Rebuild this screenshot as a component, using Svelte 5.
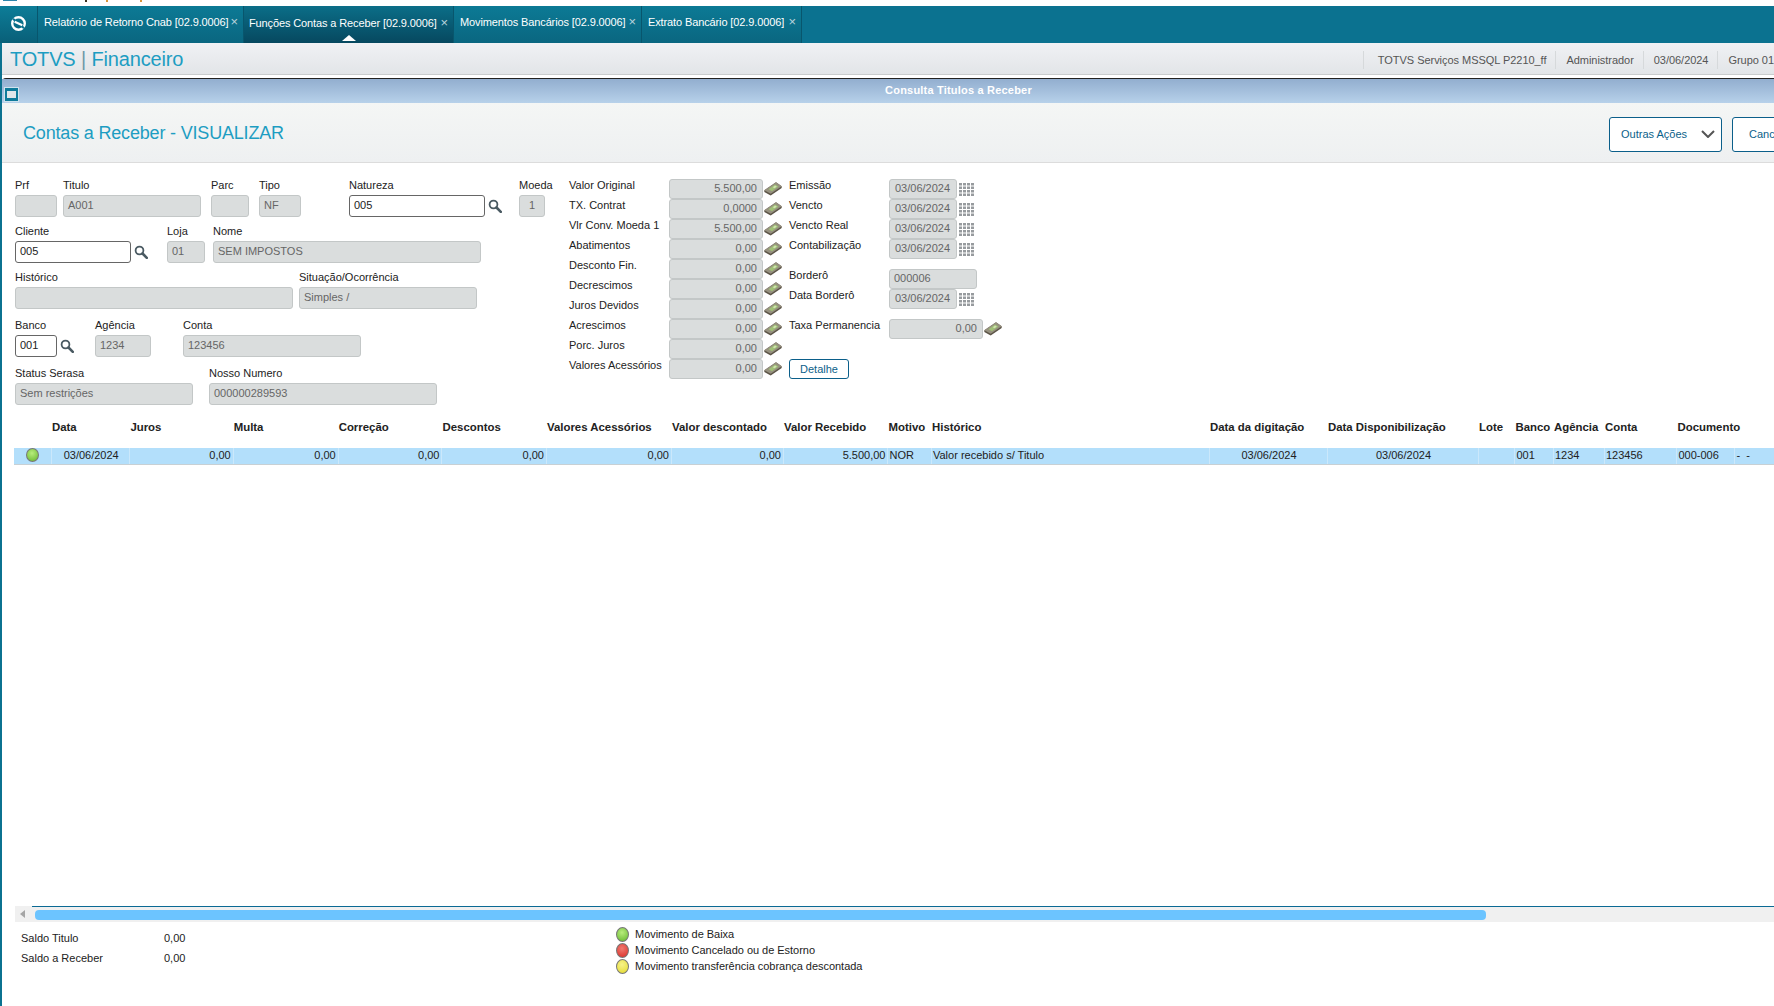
<script lang="ts">
	const tabs = [
		{ title: 'Relatório de Retorno Cnab [02.9.0006]', width: 206 },
		{ title: 'Funções Contas a Receber [02.9.0006]', width: 210, active: true },
		{ title: 'Movimentos Bancários [02.9.0006]', width: 188 },
		{ title: 'Extrato Bancário [02.9.0006]', width: 160 }
	];

	const headerInfo = ['TOTVS Serviços MSSQL P2210_ff', 'Administrador', '03/06/2024', 'Grupo 01'];

	// x = left edge relative to the form column, w = input width
	const formRows = [
		{
			top: 0,
			fields: [
				{ label: 'Prf', value: '', x: 0, w: 42 },
				{ label: 'Titulo', value: 'A001', x: 48, w: 138 },
				{ label: 'Parc', value: '', x: 196, w: 38 },
				{ label: 'Tipo', value: 'NF', x: 244, w: 42 },
				{ label: 'Natureza', value: '005', x: 334, w: 136, edit: true, lookup: true },
				{ label: 'Moeda', value: '1', x: 504, w: 26, center: true }
			]
		},
		{
			top: 7,
			fields: [
				{ label: 'Cliente', value: '005', x: 0, w: 116, edit: true, lookup: true },
				{ label: 'Loja', value: '01', x: 152, w: 38 },
				{ label: 'Nome', value: 'SEM IMPOSTOS', x: 198, w: 268 }
			]
		},
		{
			top: 7,
			fields: [
				{ label: 'Histórico', value: '', x: 0, w: 278 },
				{ label: 'Situação/Ocorrência', value: 'Simples /', x: 284, w: 178 }
			]
		},
		{
			top: 9,
			fields: [
				{ label: 'Banco', value: '001', x: 0, w: 42, edit: true, lookup: true },
				{ label: 'Agência', value: '1234', x: 80, w: 56 },
				{ label: 'Conta', value: '123456', x: 168, w: 178 }
			]
		},
		{
			top: 9,
			fields: [
				{ label: 'Status Serasa', value: 'Sem restrições', x: 0, w: 178 },
				{ label: 'Nosso Numero', value: '000000289593', x: 194, w: 228 }
			]
		}
	];

	const values = [
		['Valor Original', '5.500,00'],
		['TX. Contrat', '0,0000'],
		['Vlr Conv. Moeda 1', '5.500,00'],
		['Abatimentos', '0,00'],
		['Desconto Fin.', '0,00'],
		['Decrescimos', '0,00'],
		['Juros Devidos', '0,00'],
		['Acrescimos', '0,00'],
		['Porc. Juros', '0,00'],
		['Valores Acessórios', '0,00']
	];

	const dates = ['Emissão', 'Vencto', 'Vencto Real', 'Contabilização'];

	const columns = [
		{ name: '', w: 38 },
		{ name: 'Data', value: '03/06/2024', w: 78.4, center: true },
		{ name: 'Juros', value: '0,00', w: 103.3, right: true },
		{ name: 'Multa', value: '0,00', w: 105, right: true },
		{ name: 'Correção', value: '0,00', w: 103.8, right: true },
		{ name: 'Descontos', value: '0,00', w: 104.5, right: true },
		{ name: 'Valores Acessórios', value: '0,00', w: 125, right: true },
		{ name: 'Valor descontado', value: '0,00', w: 112, right: true },
		{ name: 'Valor Recebido', value: '5.500,00', w: 104.5, right: true },
		{ name: 'Motivo', value: 'NOR', w: 43.5 },
		{ name: 'Histórico', value: 'Valor recebido s/ Titulo', w: 278 },
		{ name: 'Data da digitação', value: '03/06/2024', w: 118, center: true },
		{ name: 'Data Disponibilização', value: '03/06/2024', w: 151, center: true },
		{ name: 'Lote', value: '', w: 36.5 },
		{ name: 'Banco', value: '001', w: 38.5 },
		{ name: 'Agência', value: '1234', w: 51 },
		{ name: 'Conta', value: '123456', w: 72.5 },
		{ name: 'Documento', value: '000-006', w: 58 },
		{ name: '', value: '-\u00a0\u00a0-', w: 40 }
	];

	const legend = [
		{ text: 'Movimento de Baixa', color: 'green' },
		{ text: 'Movimento Cancelado ou de Estorno', color: 'red' },
		{ text: 'Movimento transferência cobrança descontada', color: 'yellow' }
	];
</script>

{#snippet lookupIcon()}
	<svg class="lookup" viewBox="0 0 14 14" width="14" height="14">
		<circle cx="5.5" cy="5.5" r="3.9" fill="none" stroke="#4a5a62" stroke-width="1.8" />
		<path d="M8.5 8.5 L12.8 12.8" stroke="#4a5a62" stroke-width="2.6" stroke-linecap="round" />
	</svg>
{/snippet}

{#snippet moneyIcon()}
	<svg class="money" viewBox="0 0 18 14" width="18" height="14">
		<path d="M0.3 8.3 L12 0.3 L17.7 4.3 L17.7 6 L6.7 13.6 L0.3 10 Z" fill="#5d5548" />
		<path d="M0.3 8.3 L12 0.3 L17.7 4.3 L6.7 11.7 Z" fill="#96917f" />
		<path d="M4.5 7.2 L11 2.6 L14.5 4.6 L8 9.2 Z" fill="#9fbf76" />
		<path d="M8.8 5.2 L11 3.6 L12.8 4.6 L10.6 6.2 Z" fill="#d0e2b0" />
	</svg>
{/snippet}

{#snippet calendarIcon()}
	<svg class="calendar" viewBox="0 0 15 13" width="15" height="13">
		<rect x="0" y="0" width="15" height="13" fill="#979b9e" />
		<path
			d="M3.5 0 V13 M7.5 0 V13 M11.5 0 V13 M0 3 H15 M0 6.5 H15 M0 10 H15"
			stroke="#fff"
			stroke-width="1"
		/>
	</svg>
{/snippet}

<div class="page">
	<div class="window-strip">
		<span class="window-icon"></span>
		<span class="speck dark"></span>
		<span class="speck orange-a"></span>
		<span class="speck orange-b"></span>
	</div>

	<nav class="tabs">
		<div class="home">
			<svg viewBox="0 0 20 20" width="17" height="17">
				<circle cx="10" cy="10" r="7.4" fill="none" stroke="#fff" stroke-width="2.8" />
				<path d="M3.5 4.5 L7 7.5 M16.5 15.5 L13 12.5" stroke="#0b7290" stroke-width="2.4" />
				<path d="M5.5 8 L14.5 12" stroke="#fff" stroke-width="2.6" />
			</svg>
		</div>
		{#each tabs as tab}
			<div class="tab" class:active={tab.active} style:width="{tab.width}px">
				<span class="tab-title">{tab.title}</span>
				<span class="close">×</span>
			</div>
		{/each}
	</nav>

	<div class="body">
		<header class="app-header">
			<div class="brand">TOTVS <i>|</i> Financeiro</div>
			<ul class="info">
				{#each headerInfo as item}
					<li>{item}</li>
				{/each}
			</ul>
		</header>

		<div class="dialog">
			<div class="dialog-bar">
				<span class="dialog-icon"><b></b></span>
				<span>Consulta Titulos a Receber</span>
			</div>

			<div class="title-row">
				<h1>Contas a Receber - VISUALIZAR</h1>
				<div class="actions">
					<button class="btn more">
						Outras Ações
						<svg viewBox="0 0 14 8" width="14" height="8">
							<path d="M1 1 L7 7 L13 1" fill="none" stroke="#555" stroke-width="2" />
						</svg>
					</button>
					<button class="btn cancel">Cancelar</button>
				</div>
			</div>

			<section class="form">
				<div class="form-left">
					{#each formRows as row}
						<div class="form-row" style:margin-top="{row.top}px">
							{#each row.fields as f}
								<div class="field" style:left="{f.x}px">
									<span class="label">{f.label}</span>
									<div class="input-line">
										<span
											class="input"
											class:edit={f.edit}
											class:center={f.center}
											style:width="{f.w}px">{f.value}</span
										>
										{#if f.lookup}
											{@render lookupIcon()}
										{/if}
									</div>
								</div>
							{/each}
						</div>
					{/each}
				</div>

				<div class="form-values">
					{#each values as [label, value]}
						<div class="value-row">
							<span class="label">{label}</span>
							<span class="input num">{value}</span>
							{@render moneyIcon()}
						</div>
					{/each}
				</div>

				<div class="form-dates">
					{#each dates as label}
						<div class="value-row">
							<span class="label">{label}</span>
							<span class="input date">03/06/2024</span>
							{@render calendarIcon()}
						</div>
					{/each}
					<div class="value-row spaced">
						<span class="label">Borderô</span>
						<span class="input bordero">000006</span>
					</div>
					<div class="value-row">
						<span class="label">Data Borderô</span>
						<span class="input date">03/06/2024</span>
						{@render calendarIcon()}
					</div>
					<div class="value-row spaced">
						<span class="label">Taxa Permanencia</span>
						<span class="input num">0,00</span>
						{@render moneyIcon()}
					</div>
					<button class="btn detail">Detalhe</button>
				</div>
			</section>

			<section class="grid-wrap">
				<div class="grid-head">
					{#each columns as c}
						<span style:width="{c.w}px">{c.name}</span>
					{/each}
				</div>
				<div class="grid-row">
					{#each columns as c, i}
						<span class="cell" class:right={c.right} class:center={c.center} style:width="{c.w}px">
							{#if i === 0}
								<i class="led green"></i>
							{:else}
								{c.value}
							{/if}
						</span>
					{/each}
				</div>
			</section>

			<div class="scrollbar">
				<span class="arrow"></span>
				<span class="thumb"></span>
			</div>

			<footer class="totals">
				<dl>
					<div><dt>Saldo Titulo</dt><dd>0,00</dd></div>
					<div><dt>Saldo a Receber</dt><dd>0,00</dd></div>
				</dl>
				<ul class="legend">
					{#each legend as item}
						<li><i class="led {item.color}"></i>{item.text}</li>
					{/each}
				</ul>
			</footer>
		</div>
	</div>
</div>

<style>
	:global(body) {
		margin: 0;
		background: #fff;
	}

	.page {
		width: 1774px;
		height: 1006px;
		overflow: hidden;
		display: flex;
		flex-direction: column;
		font-family: 'Liberation Sans', Arial, sans-serif;
		font-size: 11px;
		color: #222;
		background: #fff;
	}

	.window-strip {
		height: 6px;
		flex: none;
		display: flex;
		align-items: flex-start;
	}

	.window-icon {
		width: 14px;
		height: 1px;
		margin-left: 3px;
		background: #2e86ab;
	}

	.speck {
		width: 2px;
		height: 2px;
	}

	.speck.dark {
		margin-left: 68px;
		background: #3a3320;
	}

	.speck.orange-a {
		margin-left: 19px;
		background: #d9963a;
	}

	.speck.orange-b {
		margin-left: 32px;
		background: #d9963a;
	}

	.tabs {
		height: 37px;
		flex: none;
		display: flex;
		background: #0b7290;
		color: #fff;
	}

	.home {
		width: 38px;
		display: flex;
		align-items: center;
		justify-content: center;
		padding-bottom: 2px;
		background: linear-gradient(#0d7d98, #095f78);
		border-right: 1px solid #08566d;
		box-sizing: border-box;
	}

	.tab {
		box-sizing: border-box;
		display: flex;
		align-items: center;
		justify-content: space-between;
		padding: 0 5px 6px 6px;
		white-space: nowrap;
		background: linear-gradient(#0c7a95, #0a6680);
		border-right: 1px solid #08566d;
		position: relative;
		font-size: 11px;
	}

	.tab-title {
		letter-spacing: -0.12px;
	}

	.tab.active {
		background: linear-gradient(#0b6e88, #06485f);
		padding-bottom: 4px;
		padding-left: 5px;
	}

	.tab.active::after {
		content: '';
		position: absolute;
		left: 50%;
		bottom: 2px;
		margin-left: -7px;
		border: 7px solid transparent;
		border-top: 0;
		border-bottom: 6px solid #fff;
	}

	.close {
		color: #b9d3dc;
		font-size: 13px;
	}

	.body {
		flex: 1;
		display: flex;
		flex-direction: column;
		border-left: 2px solid #0b7290;
		min-height: 0;
	}

	.app-header {
		flex: none;
		display: flex;
		align-items: center;
		justify-content: space-between;
		padding: 2px 0 0 8px;
		height: 29px;
		background: linear-gradient(#f0f1f4, #e2e5e8);
		border-bottom: 1px solid #c9cccd;
	}

	.brand {
		font-size: 20px;
		letter-spacing: -0.15px;
		color: #1d9dc2;
	}

	.brand i {
		font-style: normal;
		color: #6f98a8;
	}

	.info {
		list-style: none;
		display: flex;
		margin: 0;
		padding: 0;
		color: #555;
		font-size: 11px;
		letter-spacing: -0.04px;
	}

	.info li {
		padding: 0 2px 0 10px;
		margin-left: 7px;
		line-height: 18px;
		border-left: 1px solid #d6d9db;
		white-space: nowrap;
	}

	.info li:first-child {
		padding-left: 14px;
	}

	.info li:last-child {
		padding-right: 0;
	}

	.dialog {
		flex: 1;
		display: flex;
		flex-direction: column;
		margin-top: 3px;
		border-top: 1px solid #222;
		border-top-left-radius: 4px;
		min-height: 0;
	}

	.dialog-bar {
		height: 24px;
		flex: none;
		position: relative;
		display: flex;
		align-items: center;
		justify-content: center;
		padding: 0 0 2px 141px;
		box-sizing: border-box;
		color: #fff;
		font-weight: bold;
		font-size: 11px;
		letter-spacing: 0.2px;
		background: linear-gradient(#92aecf, #b7d1ea);
	}

	.dialog-icon {
		position: absolute;
		left: 2px;
		top: 8px;
		width: 15px;
		height: 15px;
		background: #0e7b9b;
		border: 1px solid #cfe3ee;
		box-sizing: border-box;
		display: flex;
		align-items: center;
		justify-content: center;
	}

	.dialog-icon b {
		display: block;
		width: 9px;
		height: 7px;
		background: #dfe6ea;
	}

	.title-row {
		height: 60px;
		box-sizing: border-box;
		flex: none;
		display: flex;
		align-items: center;
		justify-content: space-between;
		padding: 2px 0 0 21px;
		background: linear-gradient(#f4f6f5, #eef0f1);
		border-bottom: 1px solid #dcdcdc;
	}

	h1 {
		margin: 0;
		font-size: 18px;
		font-weight: normal;
		letter-spacing: -0.18px;
		color: #1d9dc2;
	}

	.actions {
		display: flex;
		gap: 10px;
		margin-right: -60px;
		padding-top: 1px;
	}

	.btn {
		font: inherit;
		background: #fff;
		color: #0b5f8a;
		border: 1px solid #0b5f8a;
		border-radius: 3px;
		box-sizing: border-box;
		cursor: pointer;
	}

	.more {
		width: 113px;
		height: 35px;
		display: flex;
		align-items: center;
		justify-content: space-between;
		padding: 0 6px 0 11px;
	}

	.cancel {
		width: 102px;
		height: 35px;
		text-align: left;
		padding-left: 16px;
	}

	.form {
		display: flex;
		padding: 15px 0 0 13px;
		flex: none;
	}

	.form-left {
		width: 554px;
	}

	.form-row {
		position: relative;
		height: 39px;
	}

	.field {
		position: absolute;
		top: 0;
	}

	.label {
		display: block;
		line-height: 14px;
		white-space: nowrap;
		color: #222;
	}

	.field .label {
		margin-bottom: 3px;
	}

	.input-line {
		display: flex;
		align-items: center;
		gap: 3px;
	}

	.input {
		display: block;
		box-sizing: border-box;
		height: 22px;
		line-height: 18px;
		padding: 0 4px;
		background: #dadddd;
		border: 1px solid #c3c7c7;
		border-radius: 3px;
		color: #666;
		white-space: nowrap;
	}

	.input.edit {
		background: #fff;
		border-color: #666;
		color: #222;
	}

	.input.center {
		text-align: center;
	}

	.form-values,
	.form-dates {
		display: flex;
		flex-direction: column;
		padding-top: 1px;
	}

	.form-values {
		width: 220px;
		flex: none;
	}

	.value-row {
		display: flex;
		align-items: flex-start;
		height: 20px;
	}

	.value-row .label {
		width: 100px;
		flex: none;
		margin-top: -1px;
	}

	.form-dates .value-row.spaced {
		margin-top: 10px;
	}

	.value-row .input {
		height: 20px;
		line-height: 16px;
	}

	.input.num {
		width: 94px;
		text-align: right;
		padding-right: 5px;
	}

	.input.date {
		width: 68px;
		padding-left: 5px;
	}

	.input.bordero {
		width: 88px;
	}

	.money {
		margin: 3px 0 0 1px;
		flex: none;
	}

	.calendar {
		margin: 4px 0 0 2px;
		flex: none;
	}

	.detail {
		width: 60px;
		height: 20px;
		padding: 0;
		margin-top: 20px;
	}

	.grid-wrap {
		flex: 1;
		padding: 13px 0 0 12px;
		min-height: 0;
	}

	.grid-head,
	.grid-row {
		display: flex;
		width: 1762px;
		white-space: nowrap;
	}

	.grid-head {
		height: 18px;
		line-height: 18px;
		font-weight: bold;
		font-size: 11.4px;
	}

	.grid-head span,
	.cell {
		flex: none;
		box-sizing: border-box;
	}

	.grid-row {
		height: 17px;
		margin-top: 12px;
		line-height: 15px;
		background: #b3dffb;
		border-bottom: 1px solid #c8d0d4;
		box-sizing: border-box;
	}

	.cell {
		border-right: 1px solid #cbe8fb;
		padding-left: 1px;
		position: relative;
	}

	.cell.right {
		text-align: right;
		padding-right: 2px;
	}

	.cell.center {
		text-align: center;
	}

	.led {
		display: inline-block;
		width: 13px;
		height: 15px;
		flex: none;
		border-radius: 50%;
		box-sizing: border-box;
		border: 1px solid #777;
	}

	.led.green {
		background: radial-gradient(circle at 45% 35%, #b8ec7c, #63b52c);
	}

	.led.red {
		background: radial-gradient(circle at 45% 35%, #f07a70, #d92b25);
	}

	.led.yellow {
		background: radial-gradient(circle at 45% 35%, #f7f28a, #e2d92b);
	}

	.grid-row .led {
		margin-left: 11px;
		display: block;
		height: 14px;
	}

	.scrollbar {
		flex: none;
		height: 16px;
		margin-left: 13px;
		position: relative;
		display: flex;
		align-items: center;
		background: #f0f0f0;
		box-sizing: border-box;
	}

	.scrollbar::before {
		content: '';
		position: absolute;
		left: 17px;
		right: 0;
		top: 0;
		height: 1px;
		background: #0b6a94;
	}

	.arrow {
		width: 0;
		height: 0;
		margin-left: 5px;
		border: 4px solid transparent;
		border-left: 0;
		border-right: 5px solid #a5a5a5;
	}

	.thumb {
		height: 10px;
		width: 1451px;
		margin-left: 10px;
		margin-top: 1px;
		border-radius: 4px;
		background: #6cc4ff;
	}

	.totals {
		flex: none;
		height: 84px;
		display: flex;
		padding-left: 19px;
	}

	dl {
		margin: 0;
		padding-top: 6px;
		width: 595px;
		flex: none;
	}

	dl div {
		display: flex;
		height: 20px;
		line-height: 20px;
	}

	dt {
		width: 143px;
	}

	dd {
		margin: 0;
	}

	.legend {
		list-style: none;
		margin: 0;
		padding: 4px 0 0;
		letter-spacing: -0.03px;
	}

	.legend li {
		display: flex;
		align-items: center;
		gap: 6px;
		height: 16px;
		white-space: nowrap;
	}
</style>
